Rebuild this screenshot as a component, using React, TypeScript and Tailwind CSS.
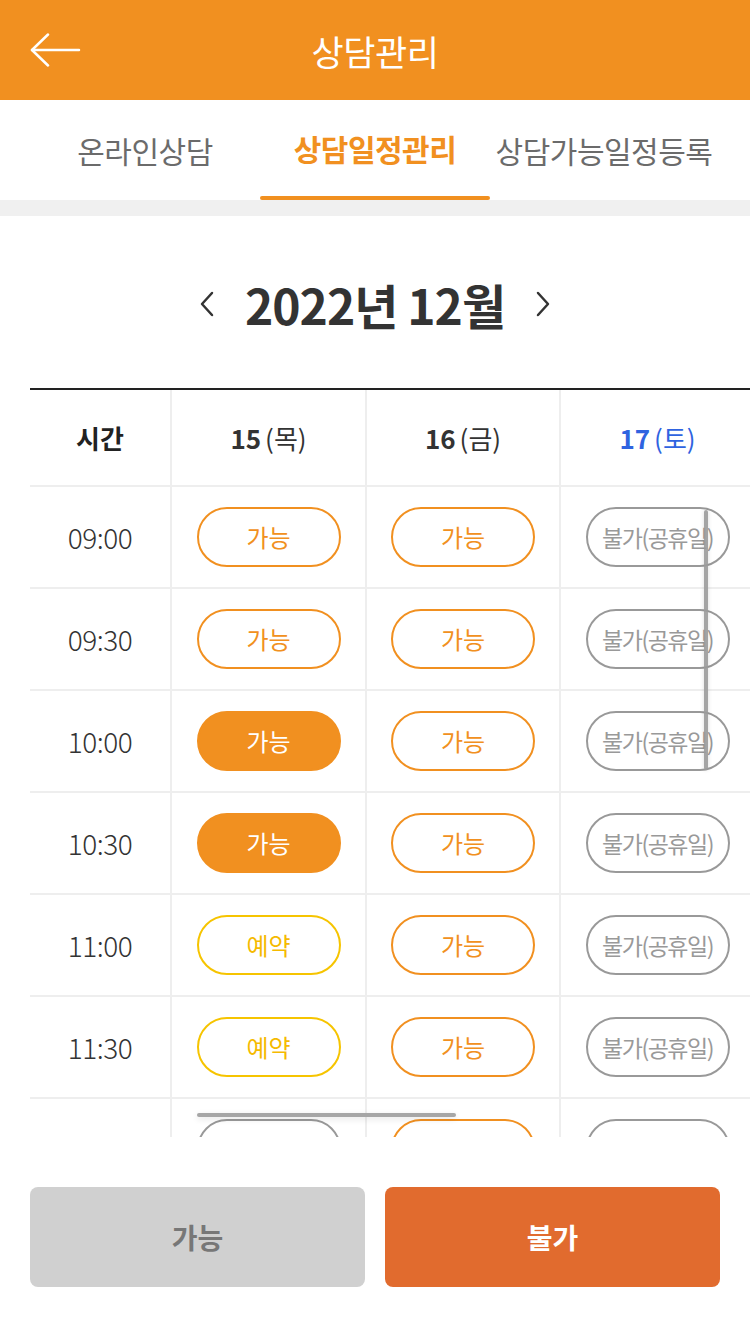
import React from "react";

type Kind = "open" | "filled" | "reserved" | "closed" | "closedBlank" | "openBlank";

const rows: { time: string; cells: Kind[] }[] = [
  { time: "09:00", cells: ["open", "open", "closed"] },
  { time: "09:30", cells: ["open", "open", "closed"] },
  { time: "10:00", cells: ["filled", "open", "closed"] },
  { time: "10:30", cells: ["filled", "open", "closed"] },
  { time: "11:00", cells: ["reserved", "open", "closed"] },
  { time: "11:30", cells: ["reserved", "open", "closed"] },
  { time: "", cells: ["closedBlank", "openBlank", "closedBlank"] },
];

function Pill({ kind }: { kind: Kind }) {
  if (kind === "filled")
    return (
      <div className="w-[144px] h-[60px] rounded-full bg-[#F19020] border-2 border-[#F19020] flex items-center justify-center text-white text-[24px] leading-none">
        가능
      </div>
    );
  if (kind === "reserved")
    return (
      <div className="w-[144px] h-[60px] rounded-full border-2 border-[#F6C400] flex items-center justify-center text-[#F5BA00] text-[24px] leading-none">
        예약
      </div>
    );
  if (kind === "closed")
    return (
      <div className="w-[144px] h-[60px] rounded-full border-2 border-[#999999] flex items-center justify-center text-[#999999] text-[23px] leading-none tracking-[-1.5px] whitespace-nowrap">
        불가(공휴일)
      </div>
    );
  if (kind === "closedBlank")
    return <div className="w-[144px] h-[60px] rounded-full border-2 border-[#999999]" />;
  if (kind === "openBlank")
    return <div className="w-[144px] h-[60px] rounded-full border-2 border-[#F19020]" />;
  return (
    <div className="w-[144px] h-[60px] rounded-full border-2 border-[#F19020] flex items-center justify-center text-[#F19020] text-[24px] leading-none">
      가능
    </div>
  );
}

export default function App() {
  return (
    <div
      className="w-[750px] h-[1337px] bg-white flex flex-col overflow-hidden"
      style={{ fontFamily: "'Noto Sans CJK KR', 'Noto Sans', sans-serif" }}
    >
      {/* Header */}
      <div className="h-[100px] bg-[#F19020] relative flex items-center justify-center shrink-0">
        <svg
          className="absolute left-[30px] top-[33px]"
          width="52"
          height="34"
          viewBox="0 0 52 34"
          fill="none"
          stroke="white"
          strokeWidth="2.5"
          strokeLinecap="round"
          strokeLinejoin="round"
        >
          <path d="M2 17 H49" />
          <path d="M18 1.5 L2 17 L18 32.5" />
        </svg>
        <span className="text-white text-[35px] leading-none tracking-[-0.5px]">상담관리</span>
      </div>

      {/* Tabs */}
      <div className="h-[100px] flex shrink-0">
        <div className="w-[260px] flex items-center justify-center pl-[30px] text-[#6b6b6b] text-[30px] leading-none tracking-[-0.5px]">
          온라인상담
        </div>
        <div className="w-[230px] flex flex-col items-center">
          <div className="flex-1 flex items-center justify-center text-[#F19020] text-[30px] font-bold leading-none tracking-[-0.5px]">
            상담일정관리
          </div>
          <div className="w-[230px] h-[4px] rounded-full bg-[#F19020]" />
        </div>
        <div className="flex-1 flex items-center justify-center pr-[32px] text-[#6b6b6b] text-[30px] leading-none tracking-[-0.5px]">
          상담가능일정등록
        </div>
      </div>
      <div className="h-[16px] bg-[#F0F0F0] shrink-0" />

      {/* Month nav */}
      <div className="h-[172px] flex items-center justify-center gap-[30px] pt-[4px] shrink-0">
        <svg width="16" height="28" viewBox="0 0 16 28" fill="none" stroke="#333" strokeWidth="2.5" strokeLinecap="round" strokeLinejoin="round">
          <path d="M13 3 L3 14 L13 25" />
        </svg>
        <span className="text-[#333333] text-[48px] font-bold leading-none tracking-[-1px]">2022년 12월</span>
        <svg width="16" height="28" viewBox="0 0 16 28" fill="none" stroke="#333" strokeWidth="2.5" strokeLinecap="round" strokeLinejoin="round">
          <path d="M3 3 L13 14 L3 25" />
        </svg>
      </div>

      {/* Table */}
      <div className="relative h-[749px] ml-[30px] overflow-hidden shrink-0">
        <div className="w-[724px] border-t-2 border-[#222222]">
          {/* header row */}
          <div className="flex h-[97px] border-b-2 border-[#EEEEEE]">
            <div className="w-[140px] flex items-center justify-center text-[#222] text-[26px] font-bold leading-none">시간</div>
            <div className="w-[195px] border-l-2 border-[#EEEEEE] flex items-center justify-center text-[#333] text-[26px] leading-none">
              <span className="font-bold">15</span>
              <span className="ml-[4px]">(목)</span>
            </div>
            <div className="w-[194px] border-l-2 border-[#EEEEEE] flex items-center justify-center text-[#333] text-[26px] leading-none">
              <span className="font-bold">16</span>
              <span className="ml-[4px]">(금)</span>
            </div>
            <div className="w-[195px] border-l-2 border-[#EEEEEE] flex items-center justify-center text-[#2F63E0] text-[26px] leading-none">
              <span className="font-bold">17</span>
              <span className="ml-[4px]">(토)</span>
            </div>
          </div>
          {rows.map((r, i) => (
            <div key={i} className="flex h-[102px] border-b-2 border-[#EEEEEE]">
              <div className="w-[140px] flex items-center justify-center text-[#333] text-[28px] font-light leading-none tracking-[-0.5px]">
                {r.time}
              </div>
              <div className="w-[195px] border-l-2 border-[#EEEEEE] flex items-center justify-center">
                <Pill kind={r.cells[0]} />
              </div>
              <div className="w-[194px] border-l-2 border-[#EEEEEE] flex items-center justify-center">
                <Pill kind={r.cells[1]} />
              </div>
              <div className="w-[195px] border-l-2 border-[#EEEEEE] flex items-center justify-center">
                <Pill kind={r.cells[2]} />
              </div>
            </div>
          ))}
        </div>
        {/* overlay scrollbars */}
        <div className="absolute left-[674px] top-[122px] w-[4px] h-[260px] rounded-full bg-[#9a9a9a]/90 shadow-[0_0_4px_rgba(0,0,0,0.15)]" />
        <div className="absolute left-[167px] top-[725px] w-[259px] h-[4px] rounded-full bg-[#a6a6a6] shadow-[0_2px_6px_rgba(0,0,0,0.12)]" />
      </div>

      {/* Bottom buttons */}
      <div className="flex gap-[20px] px-[30px] pt-[50px] shrink-0">
        <button className="flex-1 h-[100px] rounded-[8px] bg-[#D0D0D0] text-[#777777] text-[28px] font-bold leading-none">가능</button>
        <button className="flex-1 h-[100px] rounded-[8px] bg-[#E16B2E] text-white text-[28px] font-bold leading-none">불가</button>
      </div>
    </div>
  );
}
